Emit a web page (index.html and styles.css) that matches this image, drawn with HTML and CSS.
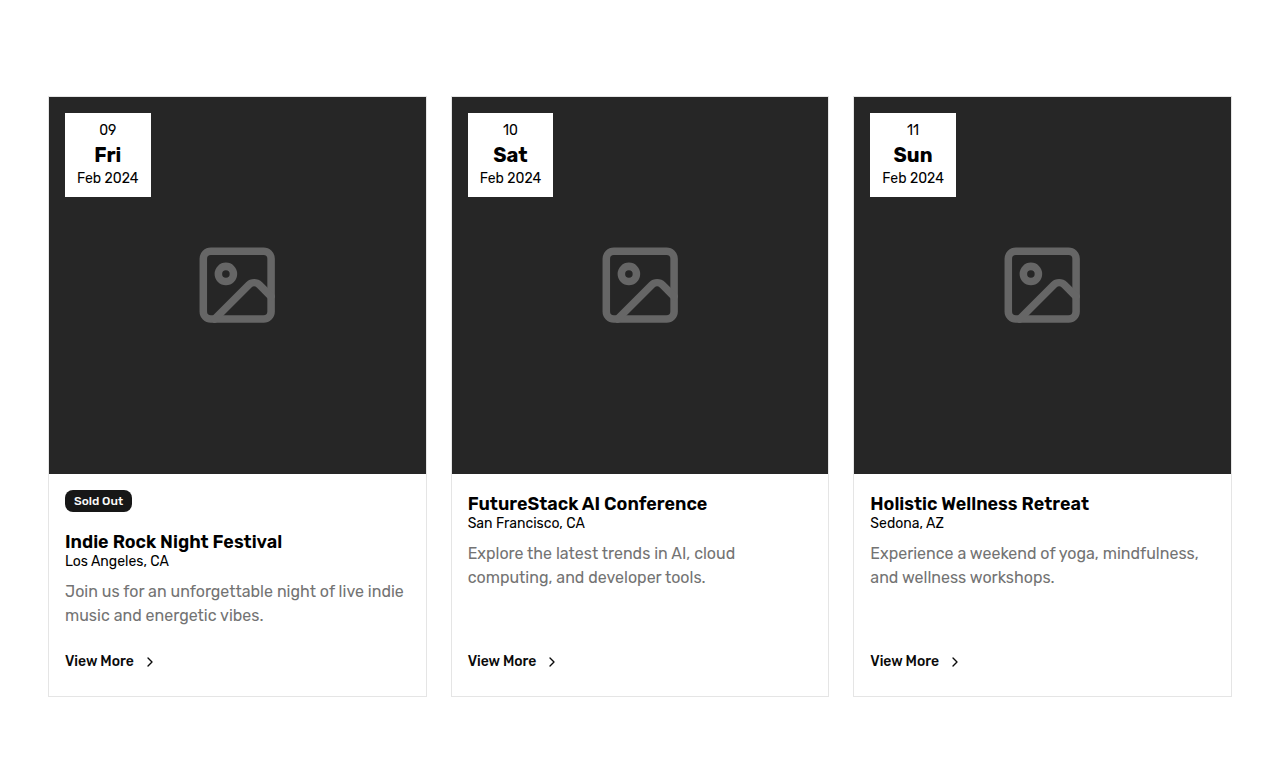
FILE: index.html
```html
<!DOCTYPE html>
<html lang="en">
<head>
<meta charset="utf-8">
<meta name="viewport" content="width=device-width, initial-scale=1">
<title>Events</title>
<link rel="stylesheet" href="styles.css">
</head>
<body>
<svg class="sprite" aria-hidden="true">
  <symbol id="image" viewBox="0 0 24 24"><path d="M5 3h14a2 2 0 0 1 2 2v14a2 2 0 0 1-2 2H5a2 2 0 0 1-2-2V5a2 2 0 0 1 2-2z"/><circle cx="9" cy="9" r="2"/><path d="m21 15-3.086-3.086a2 2 0 0 0-2.828 0L6 21"/></symbol>
  <symbol id="chevron" viewBox="0 0 24 24"><path d="m9 18 6-6-6-6"/></symbol>
</svg>
<main class="events">
  <article class="card">
    <div class="cover">
      <svg class="placeholder" aria-hidden="true"><use href="#image"/></svg>
      <time class="date" datetime="2024-02-09"><span>09</span><strong class="day">Fri</strong><span>Feb 2024</span></time>
    </div>
    <div class="body">
      <span class="badge">Sold Out</span>
      <h2 class="title">Indie Rock Night Festival</h2>
      <p class="place">Los Angeles, CA</p>
      <p class="summary">Join us for an unforgettable night of live indie music and energetic vibes.</p>
      <a class="more" href="#">View More <svg class="chevron" aria-hidden="true"><use href="#chevron"/></svg></a>
    </div>
  </article>
  <article class="card">
    <div class="cover">
      <svg class="placeholder" aria-hidden="true"><use href="#image"/></svg>
      <time class="date" datetime="2024-02-10"><span>10</span><strong class="day">Sat</strong><span>Feb 2024</span></time>
    </div>
    <div class="body">
      <h2 class="title">FutureStack AI Conference</h2>
      <p class="place">San Francisco, CA</p>
      <p class="summary">Explore the latest trends in AI, cloud computing, and developer tools.</p>
      <a class="more" href="#">View More <svg class="chevron" aria-hidden="true"><use href="#chevron"/></svg></a>
    </div>
  </article>
  <article class="card">
    <div class="cover">
      <svg class="placeholder" aria-hidden="true"><use href="#image"/></svg>
      <time class="date" datetime="2024-02-11"><span>11</span><strong class="day">Sun</strong><span>Feb 2024</span></time>
    </div>
    <div class="body">
      <h2 class="title">Holistic Wellness Retreat</h2>
      <p class="place">Sedona, AZ</p>
      <p class="summary">Experience a weekend of yoga, mindfulness, and wellness workshops.</p>
      <a class="more" href="#">View More <svg class="chevron" aria-hidden="true"><use href="#chevron"/></svg></a>
    </div>
  </article>
</main>
</body>
</html>
```
FILE: styles.css
```css
* { box-sizing: border-box; }
body {
  margin: 0;
  background: #fff;
  color: #0a0a0a;
  font-family: Rubik, Roboto, "Liberation Sans", sans-serif;
  font-size: 16px;
  line-height: 24px;
}
h2, p { margin: 0; }
.sprite { position: absolute; width: 0; height: 0; }
.events {
  display: grid;
  grid-template-columns: repeat(3, minmax(0, 1fr));
  gap: 24px;
  padding: 96px 48px 64px;
}
.card {
  display: flex;
  flex-direction: column;
  border: 1px solid #e5e5e5;
}
.cover {
  position: relative;
  display: grid;
  place-items: center;
  aspect-ratio: 1;
  background: #262626;
}
.placeholder, .chevron {
  fill: none;
  stroke: currentColor;
  stroke-linecap: round;
  stroke-linejoin: round;
  stroke-width: 2;
}
.placeholder { width: 24%; height: 24%; color: #666; }
.date {
  position: absolute;
  top: 16px;
  left: 16px;
  display: flex;
  flex-direction: column;
  align-items: center;
  padding: 8px 12px;
  background: #fff;
  color: #000;
  font-size: 14px;
  line-height: 20px;
}
.day { font-size: 20px; font-weight: 700; line-height: 28px; }
.body {
  display: flex;
  flex: 1;
  flex-direction: column;
  align-items: flex-start;
  padding: 16px;
}
.badge {
  margin-bottom: 16px;
  padding: 3px 9px;
  border-radius: 8px;
  background: #171717;
  color: #fafafa;
  font-size: 12px;
  font-weight: 500;
  line-height: 16px;
}
.title { padding-top: 4px; color: #000; font-size: 18px; font-weight: 600; line-height: 20px; }
.place { color: #000; font-size: 14px; line-height: 20px; }
.summary { margin: 8px 0 16px; color: #737373; }
.more {
  display: inline-flex;
  align-items: center;
  gap: 8px;
  margin-top: auto;
  padding: 8px 0;
  color: #0a0a0a;
  font-size: 14px;
  font-weight: 500;
  line-height: 20px;
  text-decoration: none;
}
.chevron { width: 16px; height: 16px; }
```
